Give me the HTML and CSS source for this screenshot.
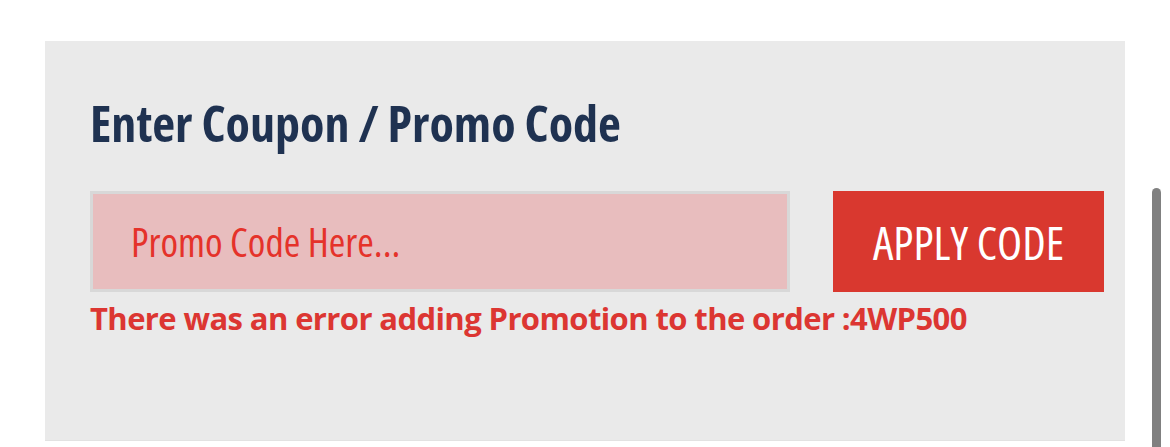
FILE: index.html
```html
<!DOCTYPE html>
<html lang="en">
<head>
    <meta charset="UTF-8">
    <meta name="viewport" content="width=device-width, initial-scale=1.0">
    <title>Promo Code</title>
    <link rel="stylesheet" href="styles.css">
</head>
<body>
    <div class="promo-box">
        <h2 class="promo-title">Enter Coupon / Promo Code</h2>
        <div class="promo-row">
            <input class="promo-input" type="text" placeholder="Promo Code Here...">
            <button class="promo-btn">APPLY CODE</button>
        </div>
        <p class="promo-error">There was an error adding Promotion to the order :4WP500</p>
    </div>
    <div class="scroll-thumb"></div>
</body>
</html>
```

FILE: styles.css
```css
body {
    margin: 0;
    background: #fff;
    font-family: "Open Sans", "Roboto Condensed", sans-serif;
    font-stretch: condensed;
}
.promo-box {
    margin: 41px 45px 0;
    width: 1080px;
    height: 400px;
    box-sizing: border-box;
    padding: 57px 21px 0 45px;
    background: #eaeaea;
    border-bottom: 1px solid #e2e2e2;
}
.promo-title {
    margin: 0;
    font-size: 50px;
    line-height: 50px;
    font-weight: bold;
    color: #1f3251;
}
.promo-row {
    display: flex;
    gap: 43px;
    margin-top: 43px;
}
.promo-input {
    width: 700px;
    height: 101px;
    box-sizing: border-box;
    border: 3px solid #d8d8d8;
    background: #e8bdbe;
    padding: 0 0 0 38px;
    font-family: inherit;
    font-stretch: condensed;
    font-size: 40px;
    color: #e5322a;
    outline: 0;
}
.promo-input::placeholder {
    color: #e5322a;
    opacity: 1;
}
.promo-btn {
    width: 271px;
    height: 101px;
    border: 0;
    background: #d9382f;
    color: #fff;
    font-family: inherit;
    font-stretch: condensed;
    font-size: 46px;
    padding: 0;
}
.promo-error {
    margin: 6px 0 0;
    font-size: 31px;
    line-height: 40px;
    font-weight: bold;
    font-stretch: normal;
    letter-spacing: -0.6px;
    color: #dc3632;
}
.scroll-thumb {
    position: fixed;
    right: 9px;
    top: 188px;
    bottom: 0;
    width: 9px;
    border-radius: 5px 5px 0 0;
    background: #808080;
}
```
